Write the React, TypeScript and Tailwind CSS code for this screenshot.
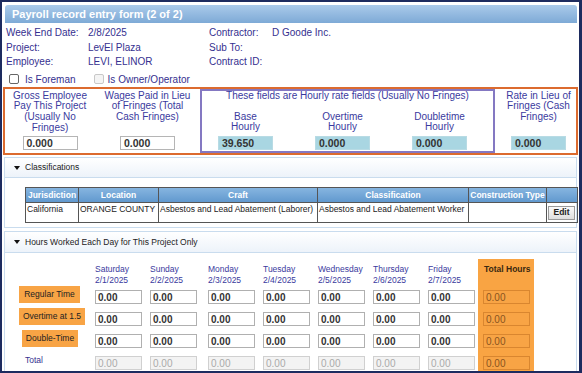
const days = [
  { day: "Saturday", date: "2/1/2025", w: "w-[55px]" },
  { day: "Sunday", date: "2/2/2025", w: "w-[58px]" },
  { day: "Monday", date: "2/3/2025", w: "w-[55px]" },
  { day: "Tuesday", date: "2/4/2025", w: "w-[55px]" },
  { day: "Wednesday", date: "2/5/2025", w: "w-[55px]" },
  { day: "Thursday", date: "2/6/2025", w: "w-[55px]" },
  { day: "Friday", date: "2/7/2025", w: "w-[50px]" },
];

const labels = [
  { text: "Regular Time", box: "ml-[14px] w-[61px]" },
  { text: "Overtime at 1.5", box: "ml-[14px] w-[66px]" },
  { text: "Double-Time", box: "ml-[17px] w-[56px]" },
];

function Panel({ title, className, children }: { title: string; className: string; children: React.ReactNode }) {
  return (
    <div className={`mx-[2px] border border-[#c9dcee] ${className}`}>
      <div className="flex items-center gap-[5px] border-b border-[#c9dcee] bg-linear-to-b from-white to-[#edf3fa] pl-[9px] text-[8.5px] text-[#222]">
        <svg width="6" height="4" viewBox="0 0 6 4">
          <path d="M0 0h6L3 4z" fill="#111" />
        </svg>
        {title}
      </div>
      {children}
    </div>
  );
}

function RateBox({ value, blue }: { value: string; blue?: boolean }) {
  return (
    <div
      className={`mt-auto flex h-[14px] w-[55px] items-center pl-[3px] text-[10.5px] font-bold text-[#333] ${
        blue ? "border border-[#b8dbe4] bg-[#a9d6e2]" : "border border-[#b5b5b5] bg-white"
      }`}
    >
      {value}
    </div>
  );
}

function HourBox({ kind }: { kind: "edit" | "total" | "sum" }) {
  const style =
    kind === "edit"
      ? "border-[#b0b0b0] bg-white font-bold text-[#333]"
      : kind === "total"
        ? "border-[#d0d0d0] bg-[#f3f3f3] text-[#aaa]"
        : "border-[#d9862f] bg-[#f8a445] text-[#8a5420]";
  return (
    <div className={`flex h-[14px] w-[47px] items-center border pl-[2px] text-[10px] ${style}`}>0.00</div>
  );
}

export default function App() {
  return (
    <div className="h-[373px] w-[582px] overflow-hidden border-y-2 border-l-2 border-r-[3px] border-[#1d2b5f] bg-white font-['Liberation_Sans',Arial,sans-serif]">
      <div className="ml-[3px] mr-[2px] mt-[3px] flex h-[18px] items-center rounded-t-[3px] bg-linear-to-b from-[#aacaea] to-[#7eaad6] pl-[7px] text-[11px] font-bold text-white">
        Payroll record entry form (2 of 2)
      </div>

      <div className="mt-[3px] grid grid-cols-[82px_121px_63px_1fr] pl-[4px] text-[10px] leading-[14.5px] text-[#35308f]">
        <span>Week End Date:</span>
        <span>2/8/2025</span>
        <span>Contractor:</span>
        <span>D Goode Inc.</span>
        <span>Project:</span>
        <span>LevEl Plaza</span>
        <span>Sub To:</span>
        <span />
        <span>Employee:</span>
        <span>LEVI, ELINOR</span>
        <span>Contract ID:</span>
        <span />
      </div>

      <div className="mt-[2.5px] flex h-[14px] items-center pl-[7px] text-[10px] text-[#35308f]">
        <span className="h-[10px] w-[10px] rounded-[2px] border border-[#666] bg-white" />
        <span className="ml-[6px]">Is Foreman</span>
        <span className="ml-[18px] h-[10px] w-[10px] rounded-[2px] border border-[#c8c8c8] bg-[#f4f4f4]" />
        <span className="ml-[4px]">Is Owner/Operator</span>
      </div>

      <div className="mx-[1px] mt-[1px] flex h-[68px] border-2 border-[#dc6b2f] text-center text-[10px] leading-[10.7px] text-[#3a3a9e]">
        <div className="flex w-[90px] flex-col items-center pb-[3px] pt-[1.5px]">
          <p>
            Gross Employee
            <br />
            Pay This Project
            <br />
            (Usually No
            <br />
            Fringes)
          </p>
          <RateBox value="0.000" />
        </div>
        <div className="flex w-[105px] flex-col items-center pb-[3px] pt-[1.5px]">
          <p>
            Wages Paid in Lieu
            <br />
            of Fringes (Total
            <br />
            Cash Fringes)
          </p>
          <RateBox value="0.000" />
        </div>
        <div className="flex w-[295px] flex-col border-2 border-[#8478c2] pb-[1px]">
          <p className="whitespace-nowrap">These fields are Hourly rate fields (Usually No Fringes)</p>
          <div className="mt-[10px] flex flex-1 gap-[42px] pl-[16px]">
            {[
              ["Base", "39.650"],
              ["Overtime", "0.000"],
              ["Doubletime", "0.000"],
            ].map(([name, value]) => (
              <div key={name} className="flex w-[55px] flex-col items-center">
                <p className="whitespace-nowrap">
                  {name}
                  <br />
                  Hourly
                </p>
                <RateBox value={value} blue />
              </div>
            ))}
          </div>
        </div>
        <div className="flex flex-1 flex-col items-center pb-[3px] pl-[6px] pt-[1.5px]">
          <p>
            Rate in Lieu of
            <br />
            Fringes (Cash
            <br />
            Fringes)
          </p>
          <RateBox value="0.000" blue />
        </div>
      </div>

      <Panel title="Classifications" className="mt-[2px] h-[71px] [&>div:first-child]:h-[20px]">
        <table className="ml-[20px] mt-[9px] w-[552px] table-fixed border-collapse text-[8.5px] text-[#222]">
          <thead>
            <tr className="h-[15px] bg-linear-to-b from-[#86b5e0] to-[#5f97cd] text-white">
              <th className="w-[53px] border border-[#555] font-bold">Jurisdiction</th>
              <th className="w-[80px] border border-[#555] font-bold">Location</th>
              <th className="w-[159px] border border-[#555] font-bold">Craft</th>
              <th className="w-[151px] border border-[#555] font-bold">Classification</th>
              <th className="w-[78px] border border-[#555] font-bold">Construction Type</th>
              <th className="w-[31px] border border-[#555]" />
            </tr>
          </thead>
          <tbody>
            <tr className="h-[20px]">
              <td className="border border-[#555] px-[1px] align-top">California</td>
              <td className="border border-[#555] px-[1px] align-top">ORANGE COUNTY</td>
              <td className="border border-[#555] px-[1px] align-top">Asbestos and Lead Abatement (Laborer)</td>
              <td className="border border-[#555] px-[1px] align-top">Asbestos and Lead Abatement Worker</td>
              <td className="border border-[#555]" />
              <td className="border border-[#555] px-[1px]">
                <span className="flex h-[14px] w-[27px] items-center justify-center border border-[#999] bg-linear-to-b from-[#fafafa] to-[#dedede] text-[8.5px] font-bold text-[#222]">
                  Edit
                </span>
              </td>
            </tr>
          </tbody>
        </table>
      </Panel>

      <Panel title="Hours Worked Each Day for This Project Only" className="mt-[3px] h-[200px] [&>div:first-child]:h-[21px]">
        <div className="mt-[6px] flex text-[8.5px]">
          <div className="flex w-[90px] flex-col">
            <div className="h-[27px]" />
            {labels.map((l) => (
              <div key={l.text} className="h-[22px]">
                <div className={`flex h-[17px] items-center justify-center bg-[#f8a445] text-[#222] ${l.box}`}>
                  {l.text}
                </div>
              </div>
            ))}
            <div className="h-[22px] pl-[20px] leading-[17px] text-[#35308f]">Total</div>
          </div>
          {days.map((d) => (
            <div key={d.day} className={`flex flex-col ${d.w}`}>
              <div className="h-[27px] pt-[4.5px] leading-[11px] text-[#3a3a9e]">
                {d.day}
                <br />
                {d.date}
              </div>
              {["edit", "edit", "edit", "total"].map((k, i) => (
                <div key={i} className="flex h-[22px] items-center">
                  <HourBox kind={k as "edit" | "total"} />
                </div>
              ))}
            </div>
          ))}
          <div className="flex h-[140px] w-[56px] flex-col bg-[#f9a443] pl-[5px]">
            <div className="h-[27px] pl-[1px] pt-[4.5px] font-bold leading-[11px] text-[#3a2810]">Total Hours</div>
            {[0, 1, 2, 3].map((i) => (
              <div key={i} className="flex h-[22px] items-center">
                <HourBox kind="sum" />
              </div>
            ))}
          </div>
        </div>
      </Panel>
    </div>
  );
}
